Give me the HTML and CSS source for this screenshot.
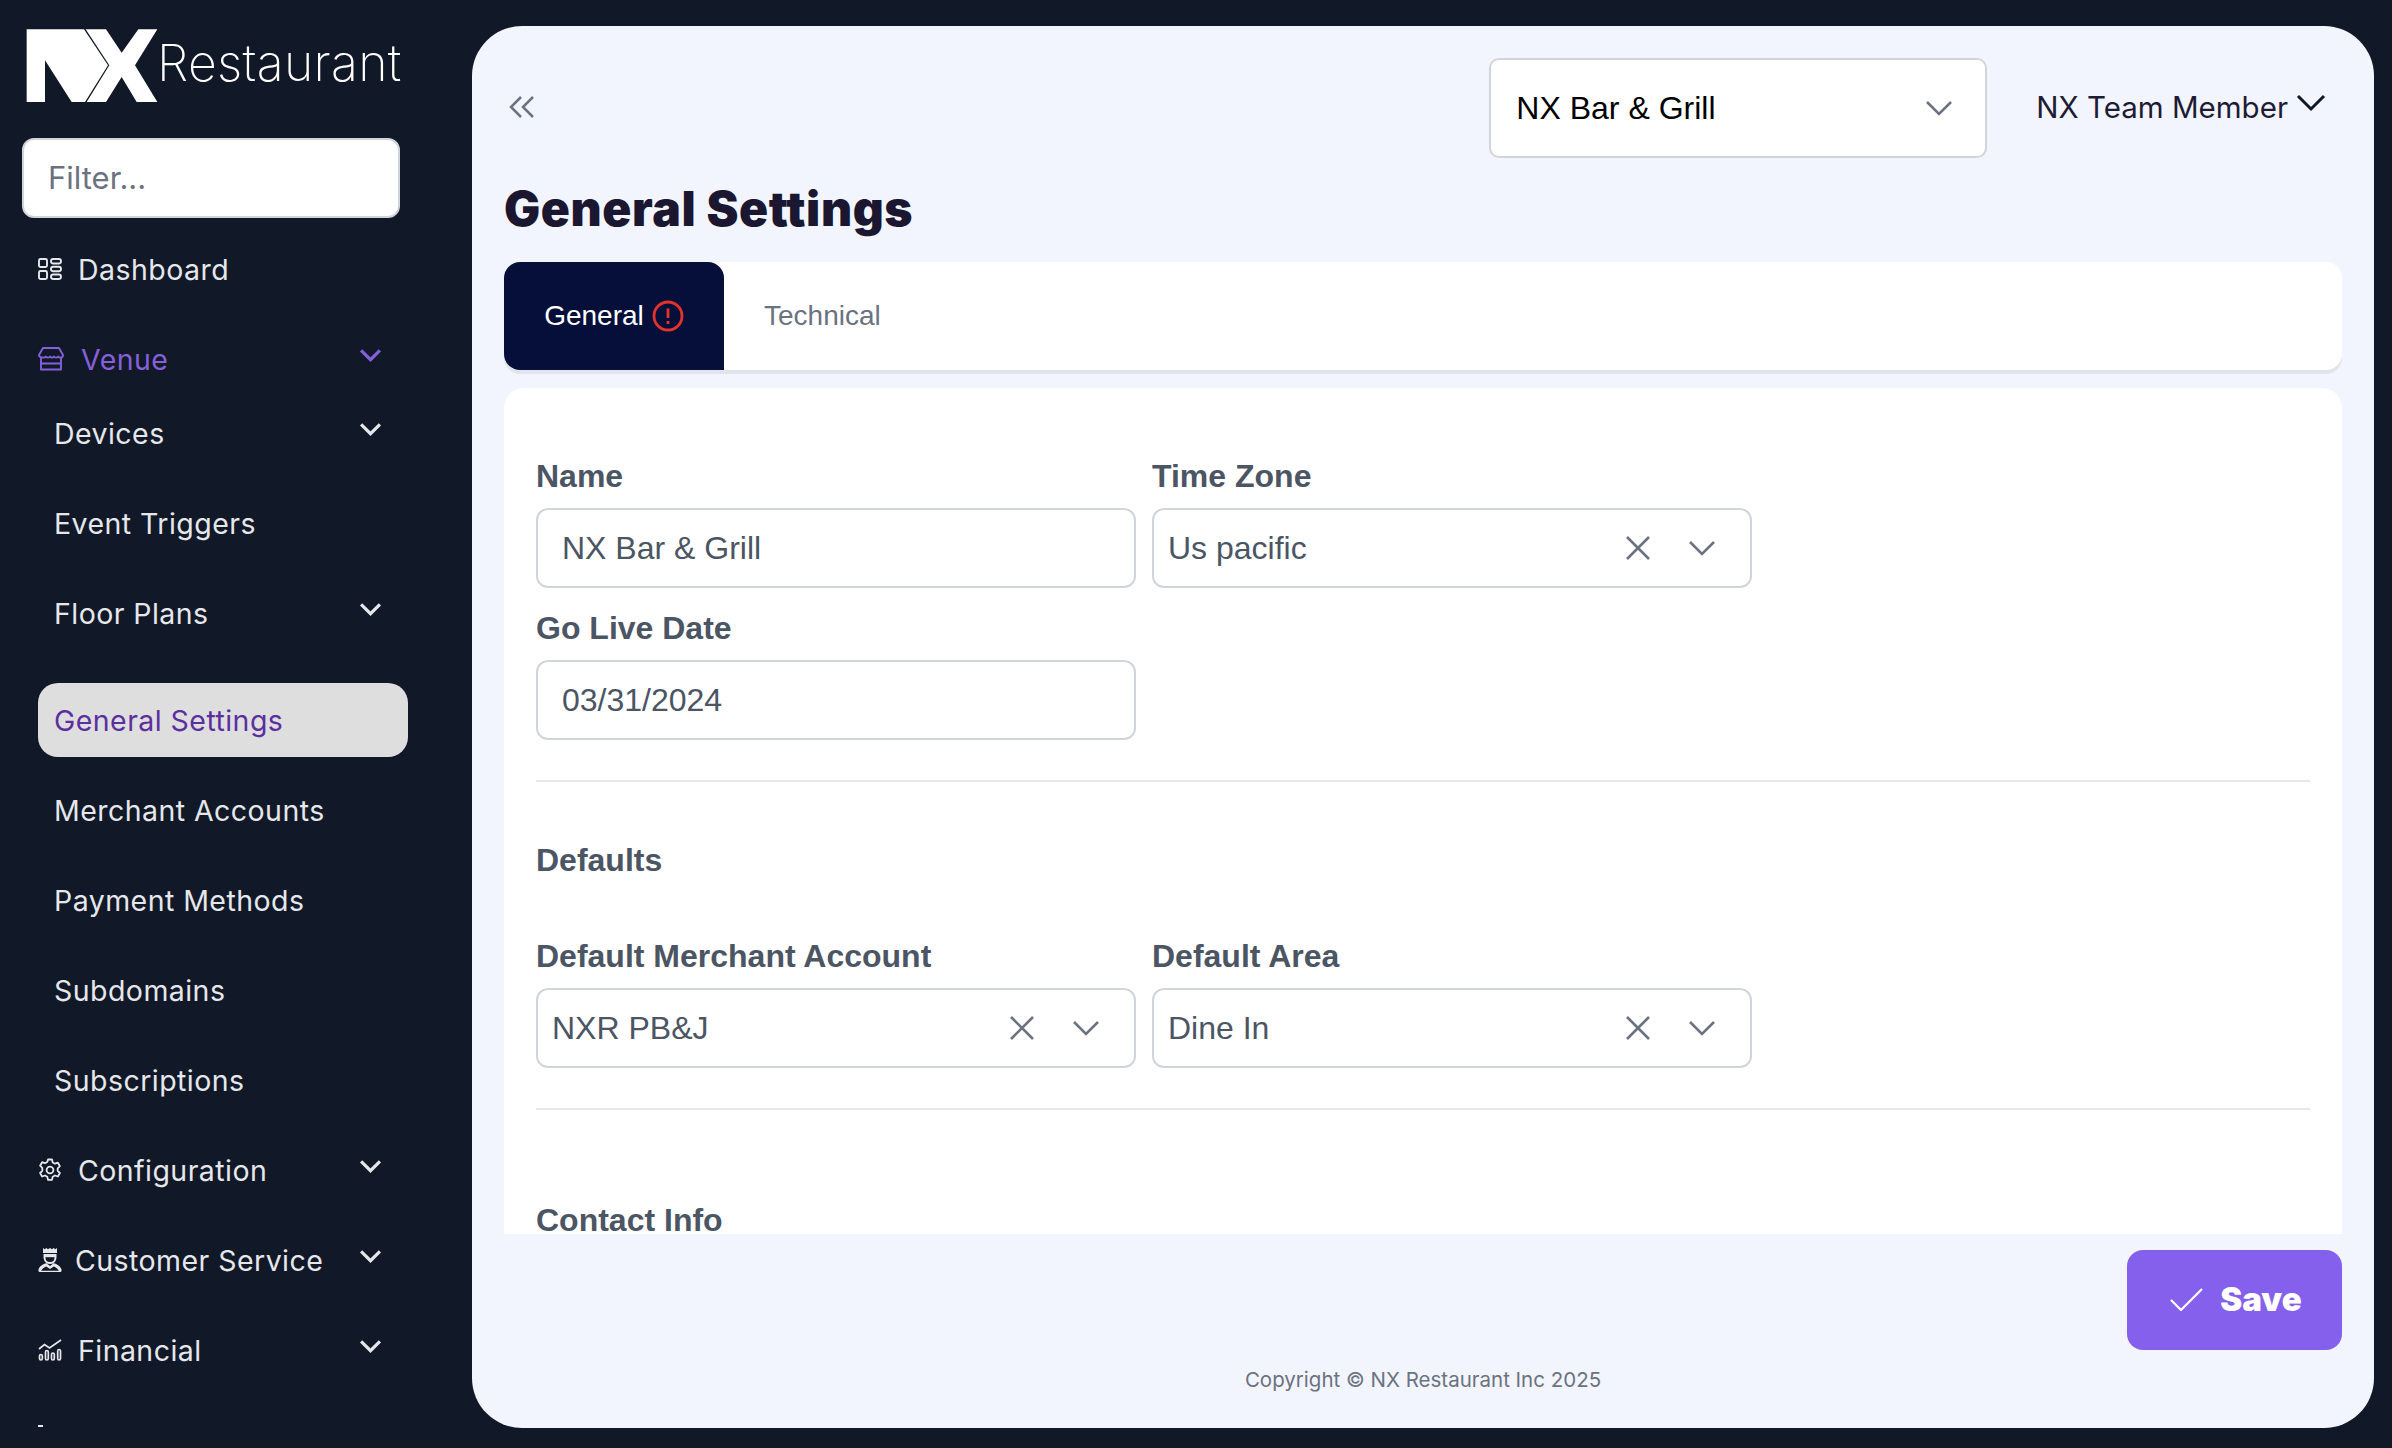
FILE: index.html
```html
<!DOCTYPE html>
<html lang="en">
<head>
    <meta charset="UTF-8">
    <title>General Settings</title>
    <link rel="stylesheet" href="styles.css">
</head>
<body>
    <div class="app">
        <aside class="sidebar">
            <div class="brand">
                <svg class="brand-mark" viewBox="0 0 450 258"><polygon fill="#fff" points="20,22 192,22 264,130 195,240 155,240 75,115 75,240 20,240"/><polygon fill="#fff" points="197,22 258,22 305,92 355,22 412,22 345,130 412,240 350,240 305,165 258,240 200,240 268,130"/></svg>
                <span class="brand-name">Restaurant</span>
            </div>
            <input class="filter" type="text" placeholder="Filter...">
            <nav class="nav">
                <a class="nav-item">
                    <svg class="nav-icon" viewBox="0 0 24 24" fill="none" stroke="currentColor" stroke-width="1.9"><rect x="1" y="2" width="8" height="8" rx="1.5"/><rect x="1" y="14" width="8" height="8" rx="1.5"/><rect x="13" y="2" width="10" height="4.5" rx="2.2"/><rect x="13" y="9.7" width="10" height="4.5" rx="2.2"/><rect x="13" y="17.5" width="10" height="4.5" rx="2.2"/></svg>
                    <span>Dashboard</span>
                </a>
                <a class="nav-item nav-item-open nav-item-venue">
                    <svg class="nav-icon nav-icon-venue" viewBox="0 0 26 24" fill="none" stroke="currentColor" stroke-width="1.9" stroke-linejoin="round"><path d="M5 1h16l4 7c0 2-1.500 2.600-2.800 2.600-1.300 0-2-1-2-1s-.9 1-2.300 1c-1.400 0-2-1-2-1s-.8 1-1.900 1-1.900-1-1.900-1-.6 1-2 1-2.300-1-2.300-1-.7 1-2 1C2.500 10.600 1 10 1 8z"/><path d="M3 11v11.500h20V11M3 16.500h20"/></svg>
                    <span>Venue</span>
                    <svg class="chevron" viewBox="0 0 22 14"><path d="M2 2l9 9 9-9"/></svg>
                </a>
                <a class="nav-item nav-sub">
                    <span>Devices</span>
                    <svg class="chevron" viewBox="0 0 22 14"><path d="M2 2l9 9 9-9"/></svg>
                </a>
                <a class="nav-item nav-sub">
                    <span>Event Triggers</span>
                </a>
                <a class="nav-item nav-sub nav-last-plain">
                    <span>Floor Plans</span>
                    <svg class="chevron" viewBox="0 0 22 14"><path d="M2 2l9 9 9-9"/></svg>
                </a>
                <a class="nav-item nav-sub nav-current">
                    <span>General Settings</span>
                </a>
                <a class="nav-item nav-sub"><span>Merchant Accounts</span></a>
                <a class="nav-item nav-sub"><span>Payment Methods</span></a>
                <a class="nav-item nav-sub"><span>Subdomains</span></a>
                <a class="nav-item nav-sub"><span>Subscriptions</span></a>
                <a class="nav-item">
                    <svg class="nav-icon" viewBox="0 0 24 24" fill="none" stroke="currentColor" stroke-width="1.8" stroke-linejoin="round"><circle cx="12" cy="12" r="3.400"/><path d="M10 1.500h4l.7 3 2.300 1.200 2.900-1 2 3.500-2.200 2.100v2.600l2.200 2.100-2 3.500-2.900-1-2.300 1.300-.7 3.100h-4l-.7-3.100-2.300-1.300-2.900 1-2-3.500 2.200-2.100V9.800L2.100 7.700l2-3.500 2.900 1 2.300-1.200z"/></svg>
                    <span>Configuration</span>
                    <svg class="chevron" viewBox="0 0 22 14"><path d="M2 2l9 9 9-9"/></svg>
                </a>
                <a class="nav-item nav-item-tight">
                    <svg class="nav-icon" viewBox="0 0 24 26"><path fill="currentColor" d="M5 1l1.700 1.200L8.300 1 10 2.200 12 1l2 1.200L15.700 1l1.600 1.200L19 1v5H5z"/><path fill="none" stroke="currentColor" stroke-width="2" d="M6.500 7v3.500c0 3.200 2.400 5.500 5.500 5.500s5.500-2.300 5.500-5.500V7"/><path fill="currentColor" d="M7 7h10v3.200H7z"/><path fill="currentColor" d="M8.500 16.300L12 19l3.500-2.700c3.600.8 7 3 8 6.200.3 1.200-.2 2.500-1.500 2.500H2c-1.300 0-1.800-1.300-1.500-2.500 1-3.200 4.400-5.400 8-6.200zM3.200 23.800h17.600c-.8-2-2.900-3.500-5-4.300L12 22l-3.800-2.500c-2.100.8-4.200 2.300-5 4.300z"/></svg>
                    <span>Customer Service</span>
                    <svg class="chevron" viewBox="0 0 22 14"><path d="M2 2l9 9 9-9"/></svg>
                </a>
                <a class="nav-item">
                    <svg class="nav-icon" viewBox="0 0 24 22" fill="none" stroke="currentColor" stroke-width="1.700"><path d="M1 10l5.500-4.500 5 3.500L23 1"/><rect x="1.500" y="15.500" width="2.800" height="5.500" rx="1.400"/><rect x="7.500" y="11.500" width="2.800" height="9.500" rx="1.400"/><rect x="13.500" y="14" width="2.800" height="7" rx="1.400"/><rect x="19.700" y="10.500" width="2.800" height="10.500" rx="1.400"/></svg>
                    <span>Financial</span>
                    <svg class="chevron" viewBox="0 0 22 14"><path d="M2 2l9 9 9-9"/></svg>
                </a>
                <a class="nav-item nav-clipped"><span class="nav-clipped-mark"></span></a>
            </nav>
        </aside>
        <main class="panel">
            <header class="topbar">
                <svg class="collapse" viewBox="0 0 28 24" fill="none" stroke="currentColor" stroke-width="2.500"><path d="M13 2L3 12l10 10M25 2L15 12l10 10"/></svg>
                <div class="venue-select">
                    <span>NX Bar &amp; Grill</span>
                    <svg class="select-chevron" viewBox="0 0 28 16"><path d="M2 2l12 12L26 2"/></svg>
                </div>
                <div class="user-menu">
                    <span>NX Team Member</span>
                    <svg viewBox="0 0 30 18"><path d="M2 2l13 13L28 2"/></svg>
                </div>
            </header>
            <h1 class="page-title">General Settings</h1>
            <div class="tabs">
                <div class="tab tab-active">General
                    <svg class="tab-alert" viewBox="0 0 32 32" fill="none" stroke="#e5332a" stroke-width="2.800"><circle cx="16" cy="16" r="14"/><path d="M16 8.500v9.500M16 21v3"/></svg>
                </div>
                <div class="tab">Technical</div>
            </div>
            <section class="card">
                <div class="form-grid">
                    <div class="field">
                        <label>Name</label>
                        <div class="control control-text">NX Bar &amp; Grill</div>
                    </div>
                    <div class="field">
                        <label>Time Zone</label>
                        <div class="control control-select">
                            <span>Us pacific</span>
                            <svg class="clear" viewBox="0 0 26 26"><path d="M2 2l22 22M24 2L2 24"/></svg>
                            <svg class="select-chevron" viewBox="0 0 28 16"><path d="M2 2l12 12L26 2"/></svg>
                        </div>
                    </div>
                    <div class="field">
                        <label>Go Live Date</label>
                        <div class="control control-text">03/31/2024</div>
                    </div>
                </div>
                <hr class="rule">
                <h2 class="group-title">Defaults</h2>
                <div class="form-grid">
                    <div class="field">
                        <label>Default Merchant Account</label>
                        <div class="control control-select">
                            <span>NXR PB&amp;J</span>
                            <svg class="clear" viewBox="0 0 26 26"><path d="M2 2l22 22M24 2L2 24"/></svg>
                            <svg class="select-chevron" viewBox="0 0 28 16"><path d="M2 2l12 12L26 2"/></svg>
                        </div>
                    </div>
                    <div class="field">
                        <label>Default Area</label>
                        <div class="control control-select">
                            <span>Dine In</span>
                            <svg class="clear" viewBox="0 0 26 26"><path d="M2 2l22 22M24 2L2 24"/></svg>
                            <svg class="select-chevron" viewBox="0 0 28 16"><path d="M2 2l12 12L26 2"/></svg>
                        </div>
                    </div>
                </div>
                <hr class="rule">
                <h2 class="group-title group-contact">Contact Info</h2>
            </section>
            <div class="actions">
                <button class="save-button">
                    <svg viewBox="0 0 34 24" fill="none" stroke="#fff" stroke-width="2.200"><path d="M2 13l10 10L33 2"/></svg>
                    Save
                </button>
            </div>
            <footer class="copyright">Copyright &copy; NX Restaurant Inc 2025</footer>
        </main>
    </div>
</body>
</html>
```

FILE: styles.css
```css
* { box-sizing: border-box; }
body { margin: 0; height: 1448px; overflow: hidden; background-color: #111827; font-family: "Liberation Sans", Arial, sans-serif; }
.app { display: flex; height: 1448px; }

/* sidebar */
.sidebar { width: 472px; height: 1430px; flex-shrink: 0; overflow: hidden; }
.brand { display: flex; height: 108px; }
.brand-mark { width: 150px; height: 86px; margin: 22px 0 0 20px; flex-shrink: 0; }
.brand-name { margin: 33px 0 0 -13px; font-family: Inter, sans-serif; font-weight: 200; font-size: 50px; line-height: 60px; letter-spacing: 0.3px; color: #fff; }
.filter { display: block; width: 378px; height: 80px; margin: 30px 0 0 22px; padding: 0 24px 2px; border: 2px solid #d1d5db; border-radius: 12px; background: #fff; font-family: Inter, sans-serif; font-size: 31px; outline: none; }
.filter::placeholder { color: #6b7280; opacity: 1; }
.nav { display: flex; flex-direction: column; gap: 16px; width: 370px; margin: 14px 0 0 38px; }
.nav-item { display: flex; align-items: center; height: 74px; flex-shrink: 0; padding-right: 26px; color: #e5e7eb; font-family: Inter, sans-serif; font-size: 28.5px; letter-spacing: 0.45px; }
.nav-icon { width: 24px; height: 24px; margin-right: 16px; flex-shrink: 0; }
.nav-item-tight .nav-icon { height: 26px; margin-right: 13px; }
.nav-item-open { color: #8560d8; }
.nav-item-venue { margin-bottom: -16px; }
.nav-icon-venue { width: 26px; margin-right: 17px; }
.chevron { width: 23px; height: 15px; margin-left: auto; margin-top: -8px; fill: none; stroke: currentColor; stroke-width: 3; }
.nav-sub { padding-left: 16px; }
.nav-last-plain { margin-bottom: 17px; }
.nav-current { background-color: #dedede; border-radius: 20px; color: #5b2f9e; }
.nav-clipped { align-items: flex-start; padding-top: 22px; }
.nav-clipped-mark { width: 5px; height: 2px; background-color: #e5e7eb; }

/* main panel */
.panel { display: flex; flex-direction: column; width: 1902px; height: 1402px; margin-top: 26px; padding: 0 32px 0; border-radius: 50px; background-color: #f2f5fd; }
.topbar { display: flex; align-items: center; height: 100px; margin-top: 32px; }
.collapse { width: 28px; height: 24px; margin: -2px 0 0 4px; color: #6b7280; }
.venue-select { display: flex; align-items: center; justify-content: space-between; width: 498px; height: 100px; margin-left: auto; padding: 0 32px 0 25px; border: 2px solid #d1d5db; border-radius: 10px; background: #fff; font-size: 32px; color: #000; }
.select-chevron { width: 28px; height: 16px; flex-shrink: 0; fill: none; stroke: #6b7280; stroke-width: 2.600; }
.user-menu { display: flex; align-items: center; margin: -2px 16px 0 49px; font-family: Inter, sans-serif; font-size: 29.500px; color: #1e1b34; }
.user-menu svg { width: 30px; height: 18px; margin: -8px 0 0 8px; fill: none; stroke: #111827; stroke-width: 3; }
.page-title { margin: 21px 0 0; font-family: Inter, sans-serif; font-size: 48px; line-height: 60px; font-weight: 900; letter-spacing: 0.6px; color: #1b1730; }
.tabs { display: flex; height: 108px; margin-top: 23px; flex-shrink: 0; border-radius: 16px; background: #fff; box-shadow: 0 4px 0 #e2e4ec; }
.tab { display: flex; align-items: center; gap: 8px; height: 108px; padding: 0 40px; font-size: 28px; color: #6b7280; }
.tab-active { width: 220px; padding: 0; justify-content: center; border-radius: 16px 16px 0 16px; background-color: #050f3a; color: #fff; }
.tab-alert { width: 32px; height: 32px; }
.card { flex: 1; min-height: 0; margin-top: 18px; padding: 0 32px; overflow: hidden; border-radius: 20px 20px 0 0; background: #fff; }
.form-grid { display: grid; grid-template-columns: 600px 600px; column-gap: 16px; row-gap: 0; padding-top: 68px; }
.field { display: flex; flex-direction: column; }
.field label { display: block; margin-bottom: 12px; height: 40px; line-height: 40px; font-size: 32px; font-weight: bold; color: #4b5563; }
.control { display: flex; align-items: center; height: 80px; border: 2px solid #d1d5db; border-radius: 12px; font-size: 32px; color: #4b5563; margin-bottom: 20px; }
.control-text { padding: 0 24px; }
.control-select { padding: 0 34px 0 14px; }
.control-select span { flex: 1; }
.clear { width: 26px; height: 26px; margin-right: 37px; flex-shrink: 0; fill: none; stroke: #6b7280; stroke-width: 2.600; }
.rule { margin: 20px 0 0; border: 0; border-top: 2px solid #e5e7eb; }
.group-title { margin: 58px 0 0; font-size: 32px; line-height: 40px; font-weight: bold; color: #4b5563; }
.form-grid + .rule + .group-title + .form-grid { padding-top: 56px; }
.group-contact { margin-top: 90px; }
.actions { display: flex; justify-content: flex-end; margin-top: 16px; flex-shrink: 0; }
.save-button { display: flex; align-items: center; justify-content: center; gap: 17px; width: 215px; height: 100px; padding: 0 0 2px 2px; border: 0; border-radius: 16px; background-color: #8560ec; color: #fff; font-family: Inter, sans-serif; font-size: 33px; font-weight: 900; }
.save-button svg { width: 34px; height: 24px; }
.copyright { height: 78px; padding-top: 17px; flex-shrink: 0; text-align: center; font-family: Inter, sans-serif; font-size: 20.500px; line-height: 26px; color: #6b7280; }
```
